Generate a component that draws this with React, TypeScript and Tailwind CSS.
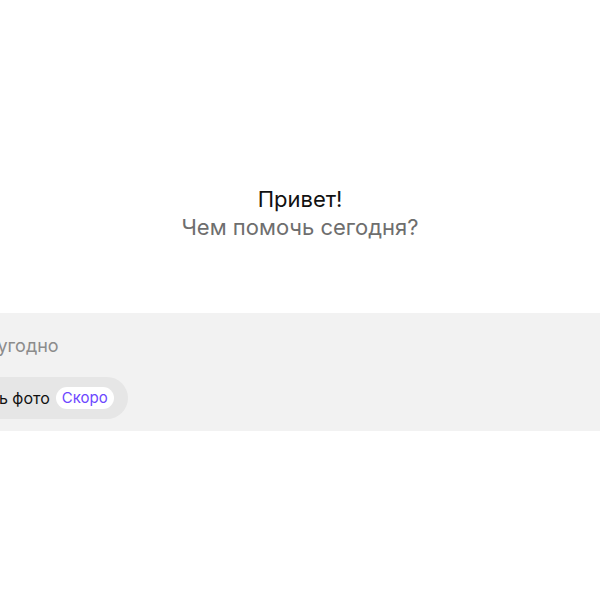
import React from "react";

export default function App() {
  return (
    <div
      className="min-h-screen bg-white flex flex-col items-center overflow-hidden"
      style={{ fontFamily: "Inter, 'Noto Sans', sans-serif" }}
    >
      {/* Greeting */}
      <div className="pt-[185px] text-center text-[22px] leading-[28px]">
        <div className="text-[#111]">Привет!</div>
        <div className="text-[#6e6e6e]">Чем помочь сегодня?</div>
      </div>

      {/* Prompt box (wider than viewport, centered) */}
      <div className="w-full flex justify-center mt-[72px]">
        <div className="w-[894px] shrink-0 bg-[#f2f2f2] h-[118px] px-5 pt-[20px]">
          <div className="text-[18px] leading-[26px] text-[#8c8c8c]">
            Спросите что угодно
          </div>
          <div className="mt-[18px] flex">
            <button className="h-[42px] rounded-full bg-[#e6e6e6] pl-[70px] pr-[14px] flex items-center gap-[6px] text-[16px] text-[#111]">
              <span>Создать фото</span>
              <span className="h-[22px] px-[6px] rounded-full bg-white text-[#6c47ff] text-[15px] leading-[22px]">
                Скоро
              </span>
            </button>
          </div>
        </div>
      </div>
    </div>
  );
}
